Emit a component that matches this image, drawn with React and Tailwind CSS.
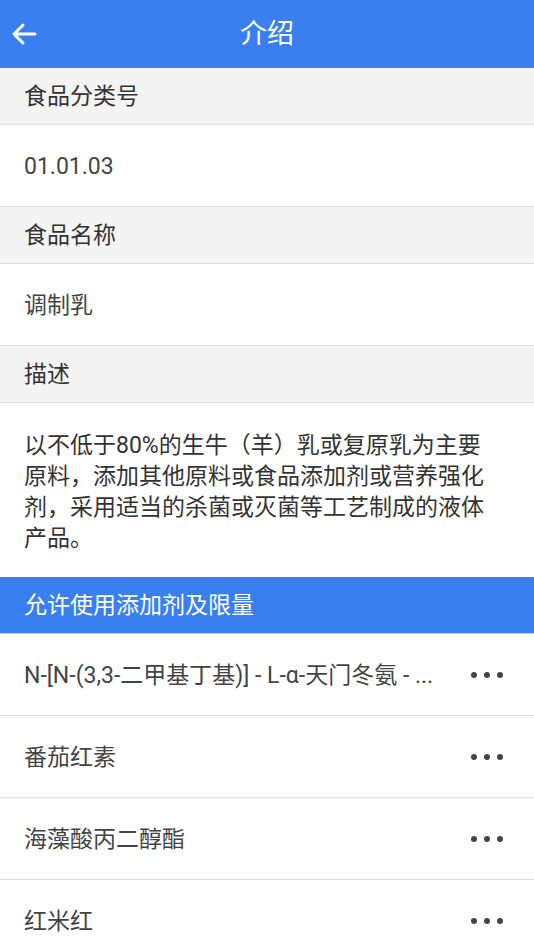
import React from "react";

const font = { fontFamily: 'Roboto, "Noto Sans CJK SC", "Noto Sans", sans-serif' };

function SectionHeader({ children }) {
  return (
    <div className="h-[57px] flex items-center px-6 pt-[2px] bg-[#f4f4f4] border-b border-[#dedede] text-[23px] text-[#333]">
      {children}
    </div>
  );
}

function ValueRow({ children }) {
  return (
    <div className="h-[82px] flex items-center px-6 pt-[3px] bg-white border-b border-[#dedede] text-[23px] text-[#444]">
      {children}
    </div>
  );
}

function Dots() {
  return (
    <div className="flex items-center gap-[7px] shrink-0">
      <span className="w-[6px] h-[6px] rounded-full bg-[#444]" />
      <span className="w-[6px] h-[6px] rounded-full bg-[#444]" />
      <span className="w-[6px] h-[6px] rounded-full bg-[#444]" />
    </div>
  );
}

function ItemRow({ children }) {
  return (
    <div className="h-[82px] flex items-center pl-6 pr-[31px] bg-white border-b border-[#dedede] text-[23px] text-[#444]">
      <div className="flex-1 min-w-0 whitespace-nowrap overflow-hidden pr-4 pt-[3px]">{children}</div>
      <Dots />
    </div>
  );
}

export default function App() {
  return (
    <div className="w-[534px] h-[950px] overflow-hidden bg-white" style={font}>
      <div className="h-[68px] bg-[#3a7ff0] relative flex items-center justify-center">
        <svg className="absolute left-[11px] top-[22px]" width="26" height="24" viewBox="0 0 26 24" fill="none">
          <path d="M24 12H3M12 3L3 12L12 21" stroke="white" strokeWidth="3" strokeLinecap="round" strokeLinejoin="round" />
        </svg>
        <span className="text-white text-[27px]">介绍</span>
      </div>
      <SectionHeader>食品分类号</SectionHeader>
      <ValueRow>01.01.03</ValueRow>
      <SectionHeader>食品名称</SectionHeader>
      <ValueRow>调制乳</ValueRow>
      <SectionHeader>描述</SectionHeader>
      <div className="h-[174px] pl-6 pr-[40px] pt-[27px] bg-white text-[23px] leading-[31px] text-[#333]">
        以不低于80%的生牛（羊）乳或复原乳为主要原料，添加其他原料或食品添加剂或营养强化剂，采用适当的杀菌或灭菌等工艺制成的液体产品。
      </div>
      <div className="h-[57px] flex items-center px-6 pt-[2px] bg-[#3a7ff0] border-b border-[#c9dafa] text-[23px] text-white">
        允许使用添加剂及限量
      </div>
      <ItemRow>N-[N-(3,3-二甲基丁基)] - L-α-天门冬氨 - ...</ItemRow>
      <ItemRow>番茄红素</ItemRow>
      <ItemRow>海藻酸丙二醇酯</ItemRow>
      <ItemRow>红米红</ItemRow>
    </div>
  );
}
